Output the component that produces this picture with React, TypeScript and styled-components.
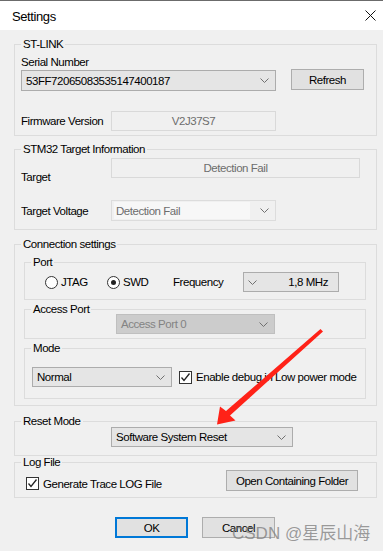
import React from 'react';
import styled, { createGlobalStyle, css } from 'styled-components';

const GlobalStyle = createGlobalStyle`
  html, body {
    margin: 0;
    padding: 0;
    background: #f0f0f0;
  }
`;

const Window = styled.div`
  position: relative;
  width: 383px;
  height: 551px;
  overflow: hidden;
  background: #f0f0f0;
  font-family: "Liberation Sans", Arial, sans-serif;
  font-size: 11.5px;
  letter-spacing: -0.45px;
  color: #000;
`;

const TitleBar = styled.div`
  height: 29px;
  border-top: 1px solid #6b6b6b;
  background: #fff;
  display: flex;
  align-items: center;
  justify-content: space-between;
  padding: 0 7px 0 12px;
`;

const Title = styled.span`
  font-size: 13px;
  letter-spacing: -0.4px;
  margin-top: 2px;
`;

const Body = styled.div`
  display: flex;
  flex-direction: column;
  padding: 0 6px 0 14px;
`;

const Group = styled.fieldset<{ $mt?: number }>`
  margin: ${(p) => p.$mt ?? 0}px 0 0 0;
  padding: 0;
  min-width: 0;
  border: 1px solid #dcdcdc;
`;

const Legend = styled.legend`
  margin-left: 6px;
  padding: 0 2px;
  line-height: 12px;
  font-size: 11.5px;
`;

const Content = styled.div<{ $pad: string }>`
  padding: ${(p) => p.$pad};
`;

const Label = styled.div<{ $w?: number; $mt?: number }>`
  line-height: 14px;
  width: ${(p) => (p.$w ? `${p.$w}px` : 'auto')};
  margin-top: ${(p) => p.$mt ?? 0}px;
  flex-shrink: 0;
  white-space: nowrap;
`;

const Row = styled.div<{ $mt?: number; $align?: string }>`
  display: flex;
  align-items: ${(p) => p.$align ?? 'center'};
  margin-top: ${(p) => p.$mt ?? 0}px;
`;

type ComboKind = 'normal' | 'disabled' | 'faint';

const Combo = styled.div<{ $w: number; $h?: number; $kind?: ComboKind; $ml?: number; $mt?: number }>`
  box-sizing: border-box;
  width: ${(p) => p.$w}px;
  height: ${(p) => p.$h ?? 20}px;
  margin-left: ${(p) => p.$ml ?? 0}px;
  margin-top: ${(p) => p.$mt ?? 0}px;
  flex-shrink: 0;
  display: flex;
  align-items: center;
  padding: 0 6px 0 4px;
  white-space: nowrap;
  ${(p) =>
    p.$kind === 'disabled'
      ? css`
          background: #cccccc;
          border: 1px solid #bfbfbf;
          color: #838383;
        `
      : p.$kind === 'faint'
      ? css`
          background: #f0f0f0;
          border: 1px solid #dcdcdc;
          color: #6d6d6d;
          padding: 1px 6px 1px 2px;
        `
      : css`
          background: #e5e5e5;
          border: 1px solid #acacac;
        `}
`;

const ComboText = styled.span<{ $fill?: boolean }>`
  flex: 1;
  line-height: 14px;
  ${(p) =>
    p.$fill &&
    css`
      background: #f7f7f7;
      align-self: stretch;
      display: flex;
      align-items: center;
      padding-left: 2px;
      margin-right: 10px;
    `}
`;

const FreqCombo = styled(Combo)`
  padding: 0 10px 0 4px;
  justify-content: space-between;
`;

const ReadField = styled.div<{ $w: number }>`
  box-sizing: border-box;
  width: ${(p) => p.$w}px;
  height: 20px;
  border: 1px solid #d9d9d9;
  background: #f0f0f0;
  color: #6d6d6d;
  display: flex;
  align-items: center;
  justify-content: center;
  flex-shrink: 0;
`;

const Button = styled.div<{ $w: number; $primary?: boolean; $mt?: number }>`
  box-sizing: border-box;
  width: ${(p) => p.$w}px;
  height: 21px;
  margin-top: ${(p) => p.$mt ?? 0}px;
  background: #e1e1e1;
  border: ${(p) => (p.$primary ? '2px solid #0078d7' : '1px solid #adadad')};
  display: flex;
  align-items: center;
  justify-content: center;
  flex-shrink: 0;
`;

const RadioItem = styled.div<{ $w: number }>`
  width: ${(p) => p.$w}px;
  display: flex;
  align-items: center;
  flex-shrink: 0;
`;

const RadioCircle = styled.span<{ $checked?: boolean }>`
  box-sizing: border-box;
  width: 13px;
  height: 13px;
  border-radius: 50%;
  border: 1px solid #333;
  background: #fff;
  margin-right: 3px;
  display: flex;
  align-items: center;
  justify-content: center;
  &::after {
    content: '';
    width: 5px;
    height: 5px;
    border-radius: 50%;
    background: ${(p) => (p.$checked ? '#222' : 'transparent')};
  }
`;

const CheckItem = styled.div<{ $ml?: number; $mt?: number }>`
  display: flex;
  align-items: center;
  margin-left: ${(p) => p.$ml ?? 0}px;
  margin-top: ${(p) => p.$mt ?? 0}px;
  white-space: nowrap;
`;

const CheckBox = styled.span`
  box-sizing: border-box;
  width: 13px;
  height: 13px;
  border: 1px solid #333;
  background: #fff;
  margin-right: 4px;
  display: flex;
  align-items: center;
  justify-content: center;
  flex-shrink: 0;
`;

const Footer = styled.div`
  display: flex;
  gap: 14px;
  margin-top: 19px;
  padding-left: 101px;
`;

const Overlay = styled.svg`
  position: absolute;
  left: 0;
  top: 0;
  pointer-events: none;
`;

const Watermark = styled.span`
  position: absolute;
  left: 232px;
  top: 519px;
  font-family: "Liberation Sans", "Noto Sans CJK SC", sans-serif;
  font-size: 17px;
  letter-spacing: 0;
  color: rgba(125, 125, 125, 0.75);
  white-space: nowrap;
  pointer-events: none;
`;

const Chevron = () => (
  <svg width="9" height="5" viewBox="0 0 9 5">
    <polyline points="0.5,0.5 4.5,4.5 8.5,0.5" fill="none" stroke="#707070" strokeWidth="1" />
  </svg>
);

const Check = () => (
  <svg width="11" height="11" viewBox="0 0 11 11">
    <polyline points="1.5,5.5 4,8.5 9.5,1.5" fill="none" stroke="#222" strokeWidth="1.3" />
  </svg>
);

const Close = () => (
  <svg width="11" height="11" viewBox="0 0 11 11">
    <line x1="0.5" y1="0.5" x2="10.5" y2="10.5" stroke="#111" strokeWidth="1" />
    <line x1="10.5" y1="0.5" x2="0.5" y2="10.5" stroke="#111" strokeWidth="1" />
  </svg>
);

export default function App() {
  return (
    <Window>
      <GlobalStyle />
      <TitleBar>
        <Title>Settings</Title>
        <Close />
      </TitleBar>

      <Body>
        <Group $mt={8}>
          <Legend>ST-LINK</Legend>
          <Content $pad="5px 0 4px 6px">
            <Label>Serial Number</Label>
            <Row $mt={1} $align="flex-start">
              <Combo $w={255} $h={21}>
                <ComboText>53FF72065083535147400187</ComboText>
                <Chevron />
              </Combo>
              <Button $w={73} $mt={-1} style={{ marginLeft: 15 }}>Refresh</Button>
            </Row>
            <Row $mt={20}>
              <Label $w={90}>Firmware Version</Label>
              <ReadField $w={165}>V2J37S7</ReadField>
            </Row>
          </Content>
        </Group>

        <Group $mt={7}>
          <Legend>STM32 Target Information</Legend>
          <Content $pad="3px 0 8px 6px">
            <Row $align="flex-start">
              <Label $w={90} $mt={12}>Target</Label>
              <ReadField $w={249}>Detection Fail</ReadField>
            </Row>
            <Row $mt={16}>
              <Label $w={90}>Target Voltage</Label>
              <Combo $w={165} $h={21} $kind="faint">
                <ComboText $fill>Detection Fail</ComboText>
                <Chevron />
              </Combo>
            </Row>
          </Content>
        </Group>

        <Group $mt={8}>
          <Legend>Connection settings</Legend>
          <Content $pad="6px 10px 6px 9px">
            <Group>
              <Legend>Port</Legend>
              <Content $pad="4px 0 7px 20px">
                <Row>
                  <RadioItem $w={62}>
                    <RadioCircle />
                    JTAG
                  </RadioItem>
                  <RadioItem $w={66}>
                    <RadioCircle $checked />
                    SWD
                  </RadioItem>
                  <Label $w={70}>Frequency</Label>
                  <FreqCombo $w={96}>
                    <Chevron />
                    <span>1,8 MHz</span>
                  </FreqCombo>
                </Row>
              </Content>
            </Group>

            <Group $mt={3}>
              <Legend>Access Port</Legend>
              <Content $pad="0 0 4px 0">
                <Combo $w={159} $kind="disabled" $ml={91} $mt={-1}>
                  <ComboText>Access Port 0</ComboText>
                  <Chevron />
                </Combo>
              </Content>
            </Group>

            <Group $mt={3}>
              <Legend>Mode</Legend>
              <Content $pad="13px 0 11px 7px">
                <Row>
                  <Combo $w={140}>
                    <ComboText>Normal</ComboText>
                    <Chevron />
                  </Combo>
                  <CheckItem $ml={7}>
                    <CheckBox>
                      <Check />
                    </CheckBox>
                    Enable debug in Low power mode
                  </CheckItem>
                </Row>
              </Content>
            </Group>
          </Content>
        </Group>

        <Group $mt={9}>
          <Legend>Reset Mode</Legend>
          <Content $pad="0 0 8px 96px">
            <Combo $w={182}>
              <ComboText>Software System Reset</ComboText>
              <Chevron />
            </Combo>
          </Content>
        </Group>

        <Group>
          <Legend>Log File</Legend>
          <Content $pad="2px 18px 6px 11px">
            <Row $align="flex-start" style={{ justifyContent: 'space-between' }}>
              <CheckItem $mt={7}>
                <CheckBox>
                  <Check />
                </CheckBox>
                Generate Trace LOG File
              </CheckItem>
              <Button $w={132}>Open Containing Folder</Button>
            </Row>
          </Content>
        </Group>

        <Footer>
          <Button $w={73} $primary>OK</Button>
          <Button $w={73}>Cancel</Button>
        </Footer>
      </Body>

      <Overlay width="383" height="551" viewBox="0 0 383 551">
        <polygon
          points="320.5,329 323,331.5 230,415.5 235.5,420.5 217,424.5 220,406.5 226,411"
          fill="#ff2218"
        />
      </Overlay>
      <Watermark>CSDN @星辰山海</Watermark>
    </Window>
  );
}
